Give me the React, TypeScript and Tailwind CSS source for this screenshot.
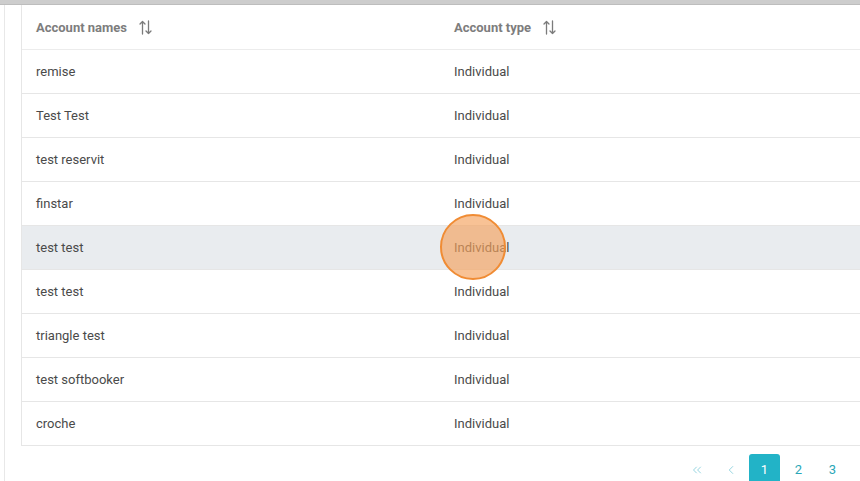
import React from "react";
import { ChevronLeft, ChevronsLeft } from "lucide-react";

const rows = [
  "remise",
  "Test Test",
  "test reservit",
  "finstar",
  "test test",
  "test test",
  "triangle test",
  "test softbooker",
  "croche",
];

function SortIcon() {
  return (
    <svg width="15" height="15" viewBox="0 0 15 15" fill="none" stroke="#7b7b7b" strokeWidth="1.3" strokeLinecap="round" strokeLinejoin="round">
      <path d="M4.5 14V1.5M2 4L4.5 1.5L7 4" />
      <path d="M10.5 1V13.5M8 11L10.5 13.5L13 11" />
    </svg>
  );
}

export default function App() {
  return (
    <div
      className="w-[860px] h-[481px] overflow-hidden bg-white flex flex-col"
      style={{ fontFamily: "Roboto, 'Liberation Sans', sans-serif" }}
    >
      <div className="h-[5px] shrink-0 bg-[#cdcdcd] border-b border-[#bdbdbd]" />
      <div className="flex flex-1 min-h-0">
        <div className="w-[4px] shrink-0 bg-white" />
        <div className="flex-1 border-l border-[#e8e8e8] pl-[16px] flex flex-col min-w-0">
          <div className="w-[900px] border-l border-[#e6e6e6]">
            <div className="flex h-[45px] items-center pt-[1px] border-b border-[#ececec] text-[13px] font-bold text-[#7d7d7d]">
              <div className="w-[418px] pl-[14px] flex items-center gap-[11px]">
                <span>Account names</span>
                <SortIcon />
              </div>
              <div className="pl-[14px] flex items-center gap-[11px]">
                <span>Account type</span>
                <SortIcon />
              </div>
            </div>
            {rows.map((name, i) => (
              <div
                key={i}
                className={`flex h-[44px] items-center pt-[1px] text-[13px] text-[#4a4a4a] border-b border-[#e6e6e6] ${
                  i === 4 ? "bg-[#e9ecef]" : ""
                }`}
              >
                <div className="w-[418px] pl-[14px]">{name}</div>
                <div className="pl-[14px] relative">
                  Individual
                  {i === 4 && (
                    <div className="absolute left-0 top-[-24px] w-[66px] h-[66px] rounded-full border-2 border-[#f08c34] bg-[#f5a25c]/65" />
                  )}
                </div>
              </div>
            ))}
          </div>
          <div className="flex gap-[3px] mt-[8px] ml-[660px] text-[13px]">
            <div className="w-[31px] h-[31px] flex items-center justify-center text-[#88cfdb]">
              <ChevronsLeft size={14} strokeWidth={1.5} />
            </div>
            <div className="w-[31px] h-[31px] flex items-center justify-center text-[#88cfdb]">
              <ChevronLeft size={14} strokeWidth={1.5} />
            </div>
            <div className="w-[31px] h-[31px] flex items-center justify-center rounded-[3px] bg-[#22b3c7] text-white">1</div>
            <div className="w-[31px] h-[31px] flex items-center justify-center text-[#2aa7b8]">2</div>
            <div className="w-[31px] h-[31px] flex items-center justify-center text-[#2aa7b8]">3</div>
          </div>
        </div>
      </div>
    </div>
  );
}
